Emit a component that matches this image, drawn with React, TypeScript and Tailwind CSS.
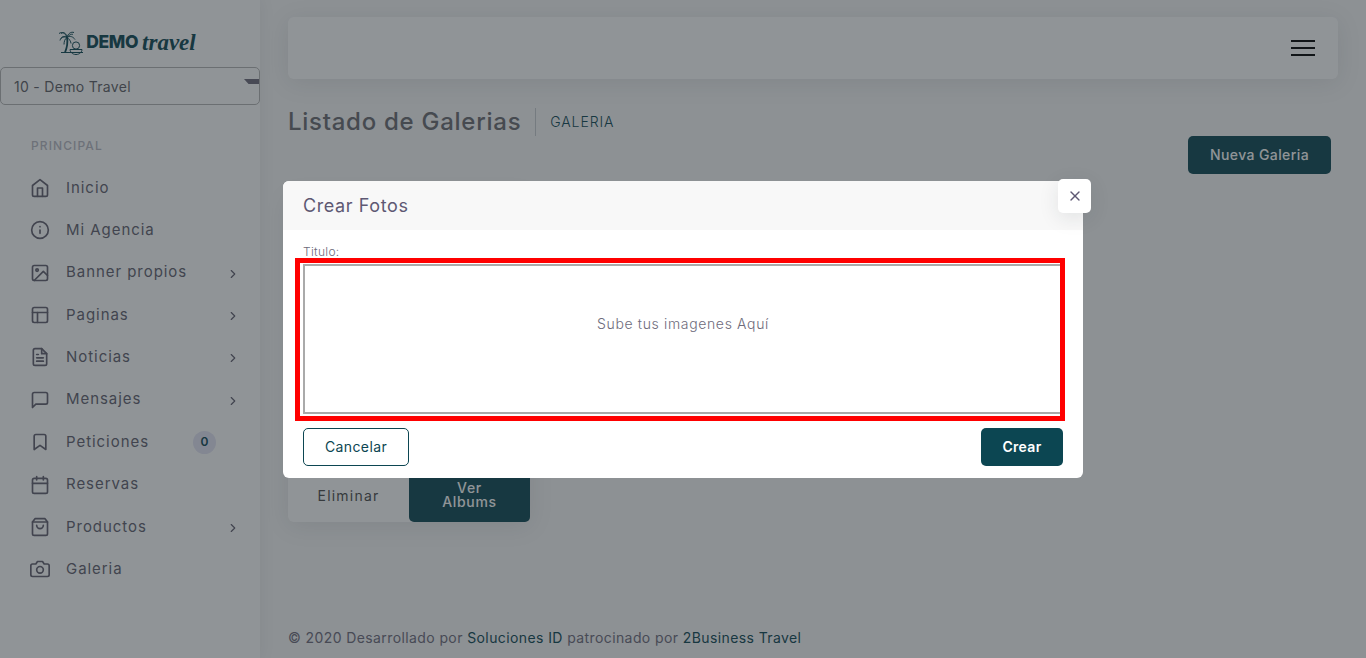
import type { ReactNode } from "react";

const font = "font-['Inter','Liberation_Sans',sans-serif]";

function Feather({ children, className = "size-5" }: { children: ReactNode; className?: string }) {
  return (
    <svg
      viewBox="0 0 24 24"
      fill="none"
      stroke="currentColor"
      strokeWidth="2"
      strokeLinecap="round"
      strokeLinejoin="round"
      className={className}
    >
      {children}
    </svg>
  );
}

const icons: Record<string, ReactNode> = {
  home: (
    <>
      <path d="M3 9l9-7 9 7v11a2 2 0 0 1-2 2H5a2 2 0 0 1-2-2z" />
      <polyline points="9 22 9 12 15 12 15 22" />
    </>
  ),
  info: (
    <>
      <circle cx="12" cy="12" r="10" />
      <line x1="12" y1="16" x2="12" y2="12" />
      <line x1="12" y1="8" x2="12.01" y2="8" />
    </>
  ),
  image: (
    <>
      <rect x="3" y="3" width="18" height="18" rx="2" ry="2" />
      <circle cx="8.5" cy="8.5" r="1.5" />
      <polyline points="21 15 16 10 5 21" />
    </>
  ),
  layout: (
    <>
      <rect x="3" y="3" width="18" height="18" rx="2" ry="2" />
      <line x1="3" y1="9" x2="21" y2="9" />
      <line x1="9" y1="21" x2="9" y2="9" />
    </>
  ),
  file: (
    <>
      <path d="M14 2H6a2 2 0 0 0-2 2v16a2 2 0 0 0 2 2h12a2 2 0 0 0 2-2V8z" />
      <polyline points="14 2 14 8 20 8" />
      <line x1="16" y1="13" x2="8" y2="13" />
      <line x1="16" y1="17" x2="8" y2="17" />
      <polyline points="10 9 9 9 8 9" />
    </>
  ),
  message: <path d="M21 15a2 2 0 0 1-2 2H7l-4 4V5a2 2 0 0 1 2-2h14a2 2 0 0 1 2 2z" />,
  bookmark: <path d="M19 21l-7-5-7 5V5a2 2 0 0 1 2-2h10a2 2 0 0 1 2 2z" />,
  calendar: (
    <>
      <rect x="3" y="4" width="18" height="18" rx="2" ry="2" />
      <line x1="16" y1="2" x2="16" y2="6" />
      <line x1="8" y1="2" x2="8" y2="6" />
      <line x1="3" y1="10" x2="21" y2="10" />
    </>
  ),
  bag: (
    <>
      <path d="M6 2L3 6v14a2 2 0 0 0 2 2h14a2 2 0 0 0 2-2V6l-3-4z" />
      <line x1="3" y1="6" x2="21" y2="6" />
      <path d="M16 10a4 4 0 0 1-8 0" />
    </>
  ),
  camera: (
    <>
      <path d="M23 19a2 2 0 0 1-2 2H3a2 2 0 0 1-2-2V8a2 2 0 0 1 2-2h4l2-3h6l2 3h4a2 2 0 0 1 2 2z" />
      <circle cx="12" cy="13" r="4" />
    </>
  ),
};

const menu = [
  { label: "Inicio", icon: "home" },
  { label: "Mi Agencia", icon: "info" },
  { label: "Banner propios", icon: "image", arrow: true },
  { label: "Paginas", icon: "layout", arrow: true },
  { label: "Noticias", icon: "file", arrow: true },
  { label: "Mensajes", icon: "message", arrow: true },
  { label: "Peticiones", icon: "bookmark", badge: "0" },
  { label: "Reservas", icon: "calendar" },
  { label: "Productos", icon: "bag", arrow: true },
  { label: "Galeria", icon: "camera" },
];

function Logo() {
  return (
    <div className="flex h-[30px] items-center justify-center pr-[6px] text-[#0c4652]">
      <svg viewBox="0 0 28 26" fill="none" stroke="currentColor" strokeWidth="1" className="h-[27px] w-[28px]">
        <path d="M9 8c1 5 0 10-2 15" strokeWidth="1.8" />
        <path d="M9 8C7 3 4 2 1 4M9 8C6 6 3 7 2 11M9 8c-2 1-3 4-3 7M9 8c1-4 4-6 7-5M9 8c3-2 6-1 8 2M9 8c2 1 4 4 4 6" />
        <path d="M3 4c3-2 5 0 6 3M3 9c2-2 4-2 6-1M15 5c-2-1-4 1-6 3" />
        <circle cx="18" cy="16" r="3.6" />
        <path d="M3 23h22M12 20h12c0 2-2 5-6 5s-6-3-6-5z" />
      </svg>
      <span className={`${font} text-[17.5px] font-extrabold leading-none tracking-[-0.4px]`}>DEMO</span>
      <span className="ml-[4px] font-['Liberation_Serif',serif] text-[23px] font-bold italic leading-none">travel</span>
    </div>
  );
}

function Sidebar() {
  return (
    <aside className={`flex h-full w-[260px] shrink-0 flex-col bg-white pt-[27px] shadow-[0_0_15px_rgba(34,41,47,0.08)] ${font}`}>
      <Logo />
      <div className="relative mt-[10px] flex h-[38px] items-center rounded-[5px] border border-[#b4b4b4] pl-[13px] text-[14px] tracking-[0.3px] text-[#5f5f66]">
        10 - Demo Travel
        <span className="absolute right-0 top-[11px] h-[5px] w-[15px] bg-[#6e6b7b] [clip-path:polygon(0_0,100%_0,100%_100%,30%_100%)]" />
      </div>
      <p className="mt-[33px] pl-[31px] text-[12px] font-medium leading-[15px] tracking-[1.1px] text-[#b9b9c3]">PRINCIPAL</p>
      <nav className="mt-[13.6px] flex flex-col pl-[30px] pr-[20px]">
        {menu.map((item) => (
          <div key={item.label} className="flex h-[42.4px] items-center text-[#625f6e]">
            <Feather className="size-[20px] shrink-0 text-[#625f6e]">{icons[item.icon]}</Feather>
            <span className="ml-[16px] flex-1 text-[15px] tracking-[0.95px] text-[#625f6e]">{item.label}</span>
            {item.arrow ? (
              <Feather className="mt-[2px] size-[14px]">
                <polyline points="9 18 15 12 9 6" />
              </Feather>
            ) : null}
            {item.badge ? (
              <span className="mr-[24px] flex size-[23px] items-center justify-center rounded-full bg-[#e4e4f4] text-[12px] font-semibold text-[#0c4652]">
                {item.badge}
              </span>
            ) : null}
          </div>
        ))}
      </nav>
    </aside>
  );
}

function Page() {
  return (
    <main className={`flex h-full min-w-0 flex-1 flex-col pb-[10px] pl-[28px] pr-[28px] pt-[17px] ${font}`}>
      <header className="flex h-[62px] shrink-0 items-center justify-end rounded-md bg-white pr-[23px] shadow-[0_4px_24px_rgba(34,41,47,0.1)]">
        <svg viewBox="0 0 24 18" className="h-[18px] w-[24px] text-black" fill="none" stroke="currentColor" strokeWidth="2">
          <path d="M0 2h24M0 9h24M0 16h24" />
        </svg>
      </header>
      <div className="mt-[29px] flex h-[28px] items-center">
        <h2 className="border-r border-[#c8ccd0] pr-[14px] text-[24px] font-medium leading-[28px] tracking-[0.73px] text-[#6b6b70]">
          Listado de Galerias
        </h2>
        <span className="pb-[2px] pl-[14px] text-[14px] font-light tracking-[0.9px] text-[#0c4652]">GALERIA</span>
      </div>
      <div className="mr-[7px] flex justify-end">
        <button className="h-[38px] w-[143px] rounded-[5px] bg-[#0c4652] pb-[1px] text-[14px] font-medium tracking-[0.4px] text-white">
          Nueva Galeria
        </button>
      </div>
      <div className="mt-[20px] flex h-[328px] w-[242px] items-end rounded-md bg-white shadow-[0_4px_24px_rgba(34,41,47,0.1)]">
        <button className="mb-[9px] h-[36px] flex-1 text-[14px] tracking-[1.2px] text-[#4b4b4b]">Eliminar</button>
        <button className="h-[60px] w-[121px] rounded-b-[5px] bg-[#0c4652] pb-[7px] pt-[13px] text-[14px] font-medium leading-[14px] tracking-[0.7px] text-white">
          Ver
          <br />
          Albums
        </button>
      </div>
      <p className="mt-auto text-[14px] leading-[21px] tracking-[0.4px] text-[#6e6b7b]">
        © 2020 Desarrollado por <span className="text-[#0c4652]">Soluciones ID</span> patrocinado por{" "}
        <span className="text-[#0c4652]">2Business Travel</span>
      </p>
    </main>
  );
}

function Modal() {
  return (
    <div className={`fixed inset-0 flex items-start justify-center bg-[#22292f]/50 pt-[181px] ${font}`}>
      <div className="relative w-[800px] rounded-[6px] bg-white">
        <div className="flex h-[49px] items-center rounded-t-[6px] bg-[#f8f8f8] px-5 text-[18px] font-normal tracking-[0.6px] text-[#5e5873]">
          Crear Fotos
        </div>
        <button className="absolute -right-2 -top-[2px] flex h-[34px] w-[33px] items-center justify-center rounded-[5px] bg-white text-[#5e5873] shadow-[0_5px_20px_rgba(34,41,47,0.1)]">
          <Feather className="size-[16px]">
            <line x1="18" y1="6" x2="6" y2="18" />
            <line x1="6" y1="6" x2="18" y2="18" />
          </Feather>
        </button>
        <div className="px-5 pt-[14px]">
          <p className="text-[12px] font-light leading-[15px] tracking-[0.3px] text-[#6e6b7b]">Titulo:</p>
          <div className="relative mt-[5px] flex h-[150px] items-start justify-center border-2 border-[#aaaaaa] pt-[47px] text-[14px] font-light tracking-[0.65px] text-[#6e6b7b]">
            Sube tus imagenes Aquí
            <span className="pointer-events-none absolute -bottom-[9px] -left-[10px] -right-[4px] -top-[8px] border-[5px] border-[#ff0000]" />
          </div>
        </div>
        <div className="flex justify-between px-5 pb-3 pt-[14px]">
          <button className="h-[38px] w-[106px] rounded-[5px] border border-[#0c4652] pb-[1px] text-[14px] tracking-[0.4px] text-[#0c4652]">
            Cancelar
          </button>
          <button className="h-[38px] w-[82px] rounded-[5px] bg-[#0c4652] pb-[1px] text-[14px] font-semibold tracking-[0.3px] text-white">Crear</button>
        </div>
      </div>
    </div>
  );
}

export default function App() {
  return (
    <div className="relative flex h-[658px] w-full overflow-hidden bg-[#f8f8f8]">
      <Sidebar />
      <Page />
      <Modal />
    </div>
  );
}
